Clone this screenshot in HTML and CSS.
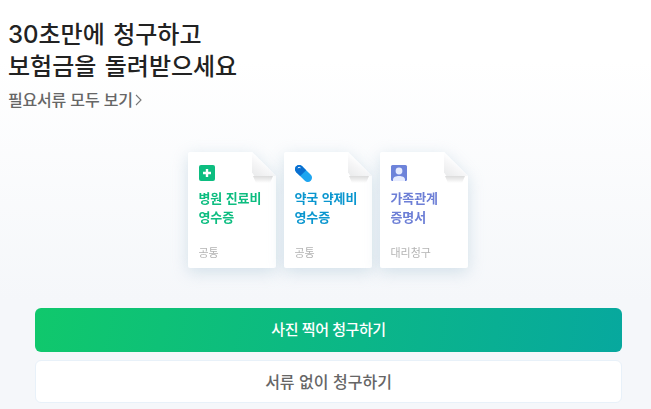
FILE: index.html
```html
<!DOCTYPE html>
<html lang="ko">
<head>
  <meta charset="UTF-8" />
  <title>보험금 청구</title>
  <link rel="stylesheet" href="styles.css">
</head>
<body>
  <div class="intro">
    <h1 class="title">30초만에 청구하고<br>보험금을 돌려받으세요</h1>
    <a class="more">필요서류 모두 보기<svg class="more-arrow" width="7" height="12" viewBox="0 0 7 12"><path d="M1 1l5 5-5 5" fill="none" stroke="#777" stroke-width="1.1"/></svg></a>
  </div>

  <div class="content">
    <div class="cards">
      <div class="card">
        <div class="sheet">
          <svg class="icon" width="16" height="16" viewBox="0 0 16 16">
            <rect width="16" height="16" rx="2" fill="#0dbd80"/>
            <path d="M8 4v8M4 8h8" stroke="#fff" stroke-width="2.4"/>
          </svg>
          <p class="name name-green">병원 진료비<br>영수증</p>
          <span class="tag">공통</span>
        </div>
        <div class="fold"></div>
      </div>
      <div class="card">
        <div class="sheet">
          <svg class="icon" width="16" height="16" viewBox="0 0 16 16">
            <g transform="rotate(45 8.5 8.5)">
              <rect x="-1.8" y="4.3" width="20.6" height="8.4" rx="4.2" fill="#1ea5f0"/>
              <path d="M8 4.3H2.4a4.2 4.2 0 0 0 0 8.4H8z" fill="#0a6fd0"/>
              <path d="M0.6 8.6a1.9 1.9 0 0 1 1.7-2" fill="none" stroke="#fff" stroke-width="0.9"/>
            </g>
          </svg>
          <p class="name name-blue">약국 약제비<br>영수증</p>
          <span class="tag">공통</span>
        </div>
        <div class="fold"></div>
      </div>
      <div class="card">
        <div class="sheet">
          <svg class="icon" width="16" height="16" viewBox="0 0 16 16">
            <rect width="16" height="16" rx="1.5" fill="#6d83da"/>
            <circle cx="8" cy="6" r="3.4" fill="#e6ebff"/>
            <path d="M2 16v-1.5c0-2.4 3-3.5 6-3.5s6 1.1 6 3.5V16z" fill="#e6ebff"/>
          </svg>
          <p class="name name-purple">가족관계<br>증명서</p>
          <span class="tag">대리청구</span>
        </div>
        <div class="fold"></div>
      </div>
    </div>

    <div class="buttons">
      <button class="btn btn-main">사진 찍어 청구하기</button>
      <button class="btn btn-sub">서류 없이 청구하기</button>
    </div>
  </div>
</body>
</html>
```

FILE: styles.css
```css
html, body {
  height: 100%;
}

body {
  margin: 0;
  overflow: hidden;
  background: linear-gradient(180deg, #fff 0, #fff 60px, #f5f7fa 300px);
  color: #222;
  font-family: "Noto Sans CJK KR", "Noto Sans", sans-serif;
}

.intro {
  padding: 19px 8px 0;
}

.title {
  margin: 0;
  font-family: Inter, "Noto Sans CJK KR", sans-serif;
  font-size: 24px;
  font-weight: 500;
  line-height: 32px;
  word-spacing: 2px;
  color: #222;
}

.more {
  display: flex;
  align-items: center;
  gap: 2px;
  margin-top: 6px;
  font-size: 16px;
  font-weight: 500;
  line-height: 20px;
  letter-spacing: -0.2px;
  color: #666;
}

.more-arrow {
  margin-top: 1px;
}

.content {
  width: 587px;
  margin: 43px 0 0 35px;
}

.cards {
  display: flex;
  justify-content: center;
  gap: 8px;
  padding-right: 1px;
}

.card {
  position: relative;
  width: 88px;
  height: 116px;
  filter: drop-shadow(0 4px 8px rgba(150, 185, 205, 0.38));
}

.sheet {
  box-sizing: border-box;
  display: flex;
  flex-direction: column;
  align-items: flex-start;
  height: 100%;
  padding: 13px 10px 9px 10.5px;
  background: #fff;
  border-radius: 2px;
  clip-path: polygon(0 0, 64px 0, 100% 24px, 100% 100%, 0 100%);
}

.fold {
  position: absolute;
  top: 0;
  right: 0;
  width: 24px;
  height: 24px;
}

/* the turned corner */
.fold::before {
  content: "";
  position: absolute;
  inset: 0;
  background: linear-gradient(215deg, #fff 42%, #f6f6f7 62%, #e9eaeb 100%);
  clip-path: polygon(0 0, 100% 100%, 10% 100%, 0 84%);
}

/* its shadow on the sheet */
.fold::after {
  content: "";
  position: absolute;
  top: 24px;
  left: 1px;
  width: 20px;
  height: 7px;
  background: linear-gradient(180deg, rgba(0, 0, 0, 0.14), rgba(0, 0, 0, 0));
  clip-path: polygon(0 0, 100% 0, 85% 100%, 15% 100%);
}

.icon {
  flex: none;
  margin-left: 0.5px;
  overflow: visible;
}

.name {
  margin: 7px 0 0;
  font-size: 13px;
  font-weight: 700;
  line-height: 19px;
  letter-spacing: -0.1px;
  white-space: nowrap;
}

.name-green {
  color: #0dbd80;
}

.name-blue {
  color: #0a96cf;
}

.name-purple {
  color: #6d7fd6;
}

.tag {
  margin-top: auto;
  font-size: 11px;
  line-height: 14px;
  color: #b4b4b4;
}

.buttons {
  display: flex;
  flex-direction: column;
  gap: 8px;
  margin-top: 40px;
}

.btn {
  display: block;
  width: 100%;
  padding: 0 0 2px;
  border-radius: 6px;
  font-family: inherit;
  font-weight: 500;
}

.btn-main {
  height: 44px;
  padding-bottom: 3px;
  border: 0;
  background: linear-gradient(100deg, #10c86c, #07a89e);
  color: #fff;
  font-size: 15px;
  letter-spacing: -0.45px;
}

.btn-sub {
  height: 43px;
  border: 1px solid #e8f1f9;
  background: #fff;
  color: #666;
  font-size: 16px;
  letter-spacing: 0;
}
```
